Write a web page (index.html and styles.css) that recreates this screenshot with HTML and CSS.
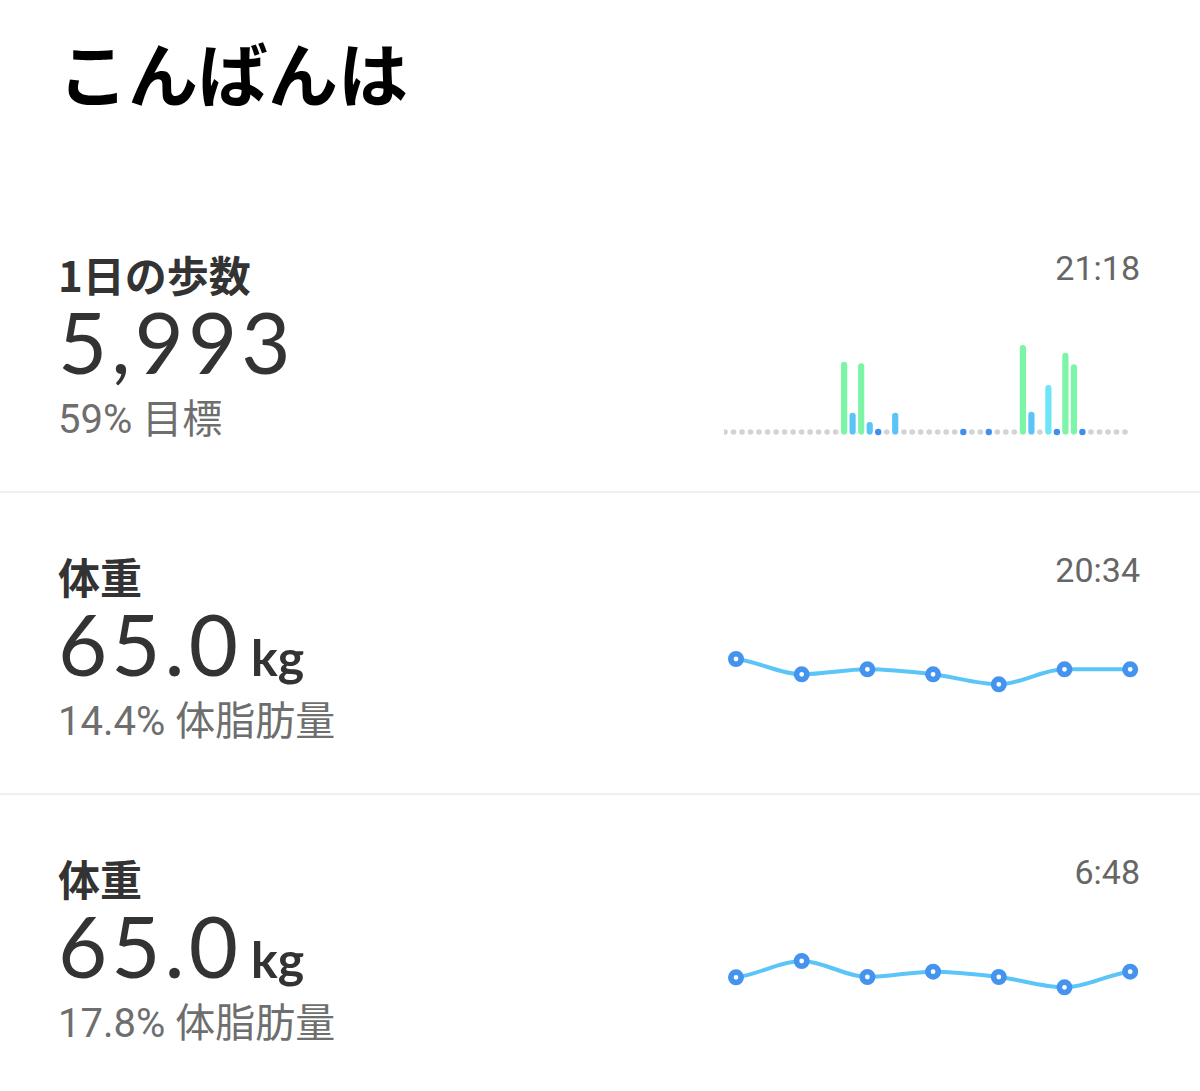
FILE: index.html
```html
<!DOCTYPE html>
<html lang="ja">
<head>
    <meta charset="UTF-8">
    <meta name="viewport" content="width=device-width, initial-scale=1.0">
    <title>ダッシュボード</title>
    <link rel="stylesheet" href="styles.css">
</head>
<body>
    <header class="greeting">
        <h1>こんばんは</h1>
    </header>

    <section class="tile">
        <div class="tile-info">
            <div class="tile-label">1日の歩数</div>
            <div class="tile-value">5,993</div>
            <div class="tile-sub">59% 目標</div>
        </div>
        <div class="tile-side">
            <div class="tile-time">21:18</div>
            <svg class="chart" viewBox="0 0 416 100" width="416" height="100">
                <g fill="#d3d3d3">
                    <circle cx="1" cy="92" r="2.8"/><circle cx="9.5" cy="92" r="2.8"/><circle cx="18" cy="92" r="2.8"/><circle cx="26.5" cy="92" r="2.8"/>
                    <circle cx="35" cy="92" r="2.8"/><circle cx="43.6" cy="92" r="2.8"/><circle cx="52.1" cy="92" r="2.8"/><circle cx="60.6" cy="92" r="2.8"/>
                    <circle cx="69.1" cy="92" r="2.8"/><circle cx="77.6" cy="92" r="2.8"/><circle cx="86.1" cy="92" r="2.8"/><circle cx="94.6" cy="92" r="2.8"/>
                    <circle cx="103.1" cy="92" r="2.8"/><circle cx="111.6" cy="92" r="2.8"/>
                    <circle cx="162.7" cy="92" r="2.8"/>
                    <circle cx="180" cy="92" r="2.8"/><circle cx="188.2" cy="92" r="2.8"/><circle cx="196.7" cy="92" r="2.8"/><circle cx="205.2" cy="92" r="2.8"/>
                    <circle cx="213.7" cy="92" r="2.8"/><circle cx="222.2" cy="92" r="2.8"/><circle cx="230.7" cy="92" r="2.8"/>
                    <circle cx="247.8" cy="92" r="2.8"/><circle cx="256.3" cy="92" r="2.8"/>
                    <circle cx="273.3" cy="92" r="2.8"/><circle cx="281.8" cy="92" r="2.8"/><circle cx="290.3" cy="92" r="2.8"/>
                    <circle cx="315.9" cy="92" r="2.8"/>
                    <circle cx="367" cy="92" r="2.8"/><circle cx="375.5" cy="92" r="2.8"/><circle cx="384" cy="92" r="2.8"/><circle cx="392.5" cy="92" r="2.8"/><circle cx="401" cy="92" r="2.8"/>
                </g>
                <g fill="#3f8ef0">
                    <circle cx="154.2" cy="92" r="3.2"/>
                    <circle cx="239.3" cy="92" r="3.2"/>
                    <circle cx="264.8" cy="92" r="3.2"/>
                    <circle cx="332.9" cy="92" r="3.2"/>
                    <circle cx="358.4" cy="92" r="3.2"/>
                </g>
                <g stroke-width="6.2" stroke-linecap="round">
                    <line x1="120.1" y1="24.8" x2="120.1" y2="91.5" stroke="#7cf5a6"/>
                    <line x1="128.6" y1="75.8" x2="128.6" y2="91.5" stroke="#5ac4f8"/>
                    <line x1="137.2" y1="26.4" x2="137.2" y2="91.5" stroke="#7cf5a6"/>
                    <line x1="145.7" y1="85" x2="145.7" y2="91.5" stroke="#5ac4f8"/>
                    <line x1="171.2" y1="75.8" x2="171.2" y2="91.5" stroke="#5ac4f8"/>
                    <line x1="298.9" y1="8" x2="298.9" y2="91.5" stroke="#7cf5a6"/>
                    <line x1="307.4" y1="74.8" x2="307.4" y2="91.5" stroke="#5ac4f8"/>
                    <line x1="324.4" y1="48" x2="324.4" y2="91.5" stroke="#6ce6f4"/>
                    <line x1="341.4" y1="15.8" x2="341.4" y2="91.5" stroke="#7cf5a6"/>
                    <line x1="349.9" y1="27.4" x2="349.9" y2="91.5" stroke="#7cf5a6"/>
                </g>
            </svg>
        </div>
    </section>

    <div class="divider"></div>

    <section class="tile">
        <div class="tile-info">
            <div class="tile-label">体重</div>
            <div class="tile-value">65.0<span class="unit">kg</span></div>
            <div class="tile-sub">14.4% 体脂肪量</div>
        </div>
        <div class="tile-side">
            <div class="tile-time">20:34</div>
            <svg class="chart" viewBox="0 0 416 100" width="416" height="100">
                <path class="trend" d="M12,17 C33.9,19.2 55.8,32.3 77.7,32.3 C99.6,32.3 121.5,27.3 143.4,27.3 C165.3,27.3 187.2,29.8 209.1,32.3 C231,34.8 252.9,42.3 274.8,42.3 C296.7,42.3 318.6,27.3 340.5,27.3 C362.4,27.3 384.3,27.3 406.2,27.3"/>
                <g class="points">
                    <circle cx="12" cy="17" r="5.2"/>
                    <circle cx="77.7" cy="32.3" r="5.2"/>
                    <circle cx="143.4" cy="27.3" r="5.2"/>
                    <circle cx="209.1" cy="32.3" r="5.2"/>
                    <circle cx="274.8" cy="42.3" r="5.2"/>
                    <circle cx="340.5" cy="27.3" r="5.2"/>
                    <circle cx="406.2" cy="27.3" r="5.2"/>
                </g>
            </svg>
        </div>
    </section>

    <div class="divider"></div>

    <section class="tile">
        <div class="tile-info">
            <div class="tile-label">体重</div>
            <div class="tile-value">65.0<span class="unit">kg</span></div>
            <div class="tile-sub">17.8% 体脂肪量</div>
        </div>
        <div class="tile-side">
            <div class="tile-time">6:48</div>
            <svg class="chart" viewBox="0 0 416 100" width="416" height="100">
                <path class="trend" d="M12,33.3 C33.9,31.1 55.8,17 77.7,17 C99.6,17 121.5,33 143.4,33 C165.3,33 187.2,27.7 209.1,27.7 C231,27.7 252.9,30.4 274.8,33 C296.7,35.6 318.6,43.3 340.5,43.3 C362.4,43.3 384.3,29.9 406.2,27.7"/>
                <g class="points">
                    <circle cx="12" cy="33.3" r="5.2"/>
                    <circle cx="77.7" cy="17" r="5.2"/>
                    <circle cx="143.4" cy="33" r="5.2"/>
                    <circle cx="209.1" cy="27.7" r="5.2"/>
                    <circle cx="274.8" cy="33" r="5.2"/>
                    <circle cx="340.5" cy="43.3" r="5.2"/>
                    <circle cx="406.2" cy="27.7" r="5.2"/>
                </g>
            </svg>
        </div>
    </section>
</body>
</html>
```

FILE: styles.css
```css
body {
    margin: 0;
    background-color: #fff;
    font-family: Roboto, "Noto Sans CJK JP", sans-serif;
    color: #333;
}
.greeting {
    height: 191px;
    box-sizing: border-box;
    padding: 32px 58px 0;
}
.greeting h1 {
    margin: 0;
    font-family: "Noto Sans CJK JP", sans-serif;
    font-size: 70px;
    line-height: 80px;
    font-weight: 700;
    color: #000;
}
.tile {
    height: 300px;
    box-sizing: border-box;
    padding: 60px 60px 0 58px;
    display: flex;
    justify-content: space-between;
}
.tile-label {
    font-family: "Noto Sans CJK JP", sans-serif;
    font-size: 42px;
    line-height: 45px;
    font-weight: 700;
    color: #333;
}
.tile-value {
    font-family: Lato, sans-serif;
    font-size: 85px;
    line-height: 90px;
    height: 90px;
    letter-spacing: 4px;
    color: #333;
}
.tile-value .unit {
    font-size: 50px;
    line-height: 1;
    font-weight: 700;
    letter-spacing: 0;
    margin-left: 9px;
}
.tile-sub {
    margin-top: 12px;
    font-family: Roboto, "Noto Sans CJK JP", sans-serif;
    font-size: 40px;
    line-height: 44px;
    color: #6e6e6e;
}
.tile-side {
    width: 416px;
    display: flex;
    flex-direction: column;
    align-items: flex-end;
}
.tile-time {
    margin-top: -3px;
    font-size: 34px;
    line-height: 40px;
    color: #666;
}
.chart {
    display: block;
    margin-top: 52px;
    overflow: hidden;
}
.trend {
    fill: none;
    stroke: #5bc5f7;
    stroke-width: 4;
}
.points circle {
    fill: #fff;
    stroke: #4493ee;
    stroke-width: 5.6;
}
.divider {
    height: 2px;
    background-color: #edf1f3;
}
```
